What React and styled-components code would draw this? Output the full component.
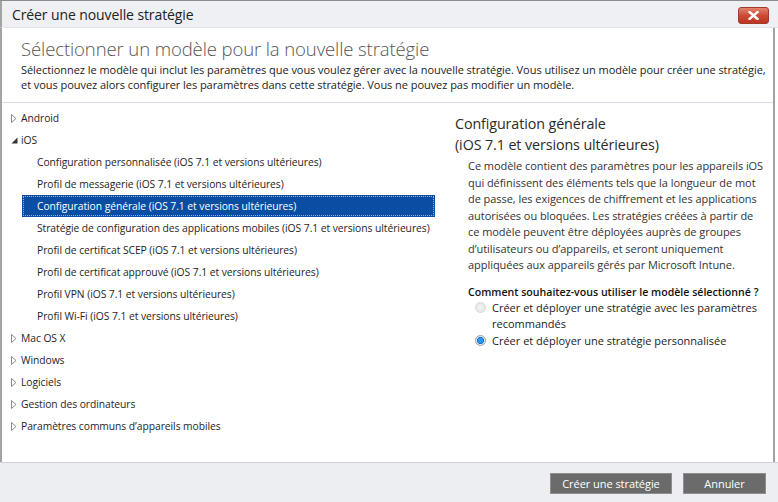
import React from 'react';
import styled, { createGlobalStyle } from 'styled-components';

const Global = createGlobalStyle`
  html, body { margin: 0; padding: 0; background: #fff; }
  body { font-family: "Open Sans", "Noto Sans", sans-serif; color: #222; }
  * { box-sizing: border-box; }
`;

const Window = styled.div`
  width: 778px;
  height: 502px;
  display: flex;
  flex-direction: column;
  border-top: 1px solid #8c8c8c;
  overflow: hidden;
  background: #fff;
`;

const TitleBar = styled.div`
  height: 27px;
  flex: none;
  display: flex;
  align-items: center;
  justify-content: space-between;
  background: #eef0f3;
  border-left: 2px solid #a3a3a3;
  border-bottom: 1px solid #dfe2e7;
  padding: 0 9px 0 10px;
`;

const TitleText = styled.span`
  font-size: 14px;
  color: #222;
  letter-spacing: -0.1px;
  margin-top: 1px;
`;

const CloseButton = styled.button`
  width: 31px;
  height: 17px;
  margin-top: 3px;
  border: 1px solid #a13a2c;
  border-radius: 3px;
  background: linear-gradient(#e3846f, #cd4b36 50%, #bb3521);
  display: flex;
  align-items: center;
  justify-content: center;
  padding: 0;
`;

const Body = styled.div`
  flex: 1;
  display: flex;
  flex-direction: column;
  border-left: 2px solid #a3a3a3;
  border-right: 2px solid #a3a3a3;
  margin-right: 3px;
  min-height: 0;
`;

const Header = styled.div`
  height: 75px;
  flex: none;
  border-bottom: 1px solid #dadde3;
  padding: 8px 0 0 19px;
`;

const Heading = styled.h1`
  margin: 0;
  font-size: 18.5px;
  font-weight: 300;
  color: #555;
  line-height: 26px;
  letter-spacing: -0.1px;
`;

const Intro = styled.p`
  margin: 0;
  font-size: 11px;
  line-height: 15px;
  color: #222;
  letter-spacing: -0.05px;
`;

const Main = styled.div`
  flex: 1;
  display: flex;
  min-height: 0;
`;

const Tree = styled.ul`
  list-style: none;
  margin: 0;
  padding: 4px 0 0 0;
  width: 433px;
  flex: none;
`;

const Row = styled.li`
  height: 22px;
  display: flex;
  align-items: center;
  font-size: 10.3px;
  letter-spacing: -0.05px;
  white-space: nowrap;
  padding-left: ${p => (p.$child ? '15px' : '0')};
  margin-left: ${p => (p.$child ? '20px' : '9px')};
  background: ${p => (p.$selected ? '#0a4ea3' : 'transparent')};
  color: ${p => (p.$selected ? '#fff' : '#1e1e1e')};
  outline: ${p => (p.$selected ? '1px dotted #8fb2dc' : 'none')};
  outline-offset: -2px;
`;

const Arrow = styled.span`
  width: 10px;
  display: inline-flex;
  align-items: center;
  justify-content: flex-start;
`;

const Details = styled.div`
  flex: 1;
  padding: 10px 0 0 20px;
  min-width: 0;
`;

const DetailTitle = styled.h2`
  margin: 0;
  font-size: 14.3px;
  font-weight: 400;
  line-height: 21px;
  color: #2a2a2a;
  letter-spacing: -0.1px;
  white-space: nowrap;
`;

const DetailText = styled.p`
  margin: 3px 0 0 13px;
  font-size: 11px;
  line-height: 16.5px;
  color: #333;
  letter-spacing: -0.05px;
  white-space: nowrap;
`;

const Question = styled.div`
  margin: 11px 0 0 13px;
  font-size: 10.6px;
  line-height: 15px;
  font-weight: 600;
  color: #111;
  white-space: nowrap;
`;

const Options = styled.div`
  margin: 0 0 0 20px;
  display: flex;
  flex-direction: column;
`;

const Option = styled.label`
  display: flex;
  align-items: flex-start;
  font-size: 11px;
  line-height: 16.5px;
  color: #222;
  gap: 6px;
  white-space: nowrap;
`;

const Radio = styled.span`
  width: 11px;
  height: 11px;
  flex: none;
  margin-top: 2.75px;
  border-radius: 50%;
  border: 1px solid ${p => (p.$checked ? '#9aa3ad' : '#d9d9d9')};
  background: ${p =>
    p.$checked
      ? 'radial-gradient(circle, #2a9af0 0 2.5px, #1166bb 3.2px, #e6eaef 3.8px)'
      : 'radial-gradient(circle, #f6f6f6, #e0e0e0)'};
`;

const Footer = styled.div`
  height: 40px;
  flex: none;
  border-top: 1px solid #cdd0d5;
  background: #eceef1;
  display: flex;
  justify-content: flex-end;
  align-items: flex-start;
  gap: 11px;
  padding: 10px 12px 0 0;
`;

const Button = styled.button`
  height: 21px;
  width: ${p => p.$w}px;
  border: 1px solid #8f8f8f;
  background: #6b6b6b;
  color: #fff;
  font-family: "Open Sans", "Noto Sans", sans-serif;
  font-size: 11px;
  padding: 0;
  letter-spacing: -0.05px;
`;

const Collapsed = () => (
  <svg width="6" height="9" viewBox="0 0 6 9">
    <path d="M0.5 0.5 L5 4.5 L0.5 8.5 Z" fill="#fff" stroke="#8a8a8a" strokeWidth="1" />
  </svg>
);

const Expanded = () => (
  <svg width="7" height="7" viewBox="0 0 7 7">
    <path d="M6.5 0.5 L6.5 6.5 L0.5 6.5 Z" fill="#333" />
  </svg>
);

const iosItems = [
  'Configuration personnalisée (iOS 7.1 et versions ultérieures)',
  'Profil de messagerie (iOS 7.1 et versions ultérieures)',
  'Configuration générale (iOS 7.1 et versions ultérieures)',
  'Stratégie de configuration des applications mobiles (iOS 7.1 et versions ultérieures)',
  'Profil de certificat SCEP (iOS 7.1 et versions ultérieures)',
  'Profil de certificat approuvé (iOS 7.1 et versions ultérieures)',
  'Profil VPN (iOS 7.1 et versions ultérieures)',
  'Profil Wi-Fi (iOS 7.1 et versions ultérieures)',
];

const others = ['Mac OS X', 'Windows', 'Logiciels', 'Gestion des ordinateurs', 'Paramètres communs d’appareils mobiles'];

export default function App() {
  return (
    <>
      <Global />
      <Window>
        <TitleBar>
          <TitleText>Créer une nouvelle stratégie</TitleText>
          <CloseButton aria-label="Fermer">
            <svg width="11" height="9" viewBox="0 0 11 9">
              <path d="M1.5 1 L9.5 8 M9.5 1 L1.5 8" stroke="#fff" strokeWidth="2.4" strokeLinecap="square" />
            </svg>
          </CloseButton>
        </TitleBar>
        <Body>
          <Header>
            <Heading>Sélectionner un modèle pour la nouvelle stratégie</Heading>
            <Intro>
              Sélectionnez le modèle qui inclut les paramètres que vous voulez gérer avec la nouvelle stratégie. Vous utilisez un modèle pour créer une stratégie,
              <br />
              et vous pouvez alors configurer les paramètres dans cette stratégie. Vous ne pouvez pas modifier un modèle.
            </Intro>
          </Header>
          <Main>
            <Tree>
              <Row>
                <Arrow><Collapsed /></Arrow>Android
              </Row>
              <Row>
                <Arrow><Expanded /></Arrow>iOS
              </Row>
              {iosItems.map((t, i) => (
                <Row key={t} $child $selected={i === 2}>{t}</Row>
              ))}
              {others.map(t => (
                <Row key={t}>
                  <Arrow><Collapsed /></Arrow>{t}
                </Row>
              ))}
            </Tree>
            <Details>
              <DetailTitle>
                Configuration générale
                <br />
                (iOS 7.1 et versions ultérieures)
              </DetailTitle>
              <DetailText>
                Ce modèle contient des paramètres pour les appareils iOS<br />
                qui définissent des éléments tels que la longueur de mot<br />
                de passe, les exigences de chiffrement et les applications<br />
                autorisées ou bloquées. Les stratégies créées à partir de<br />
                ce modèle peuvent être déployées auprès de groupes<br />
                d’utilisateurs ou d’appareils, et seront uniquement<br />
                appliquées aux appareils gérés par Microsoft Intune.
              </DetailText>
              <Question>Comment souhaitez-vous utiliser le modèle sélectionné ?</Question>
              <Options>
                <Option>
                  <Radio />
                  <span>
                    Créer et déployer une stratégie avec les paramètres
                    <br />
                    recommandés
                  </span>
                </Option>
                <Option>
                  <Radio $checked />
                  <span>Créer et déployer une stratégie personnalisée</span>
                </Option>
              </Options>
            </Details>
          </Main>
        </Body>
        <Footer>
          <Button $w={122}>Créer une stratégie</Button>
          <Button $w={83}>Annuler</Button>
        </Footer>
      </Window>
    </>
  );
}
